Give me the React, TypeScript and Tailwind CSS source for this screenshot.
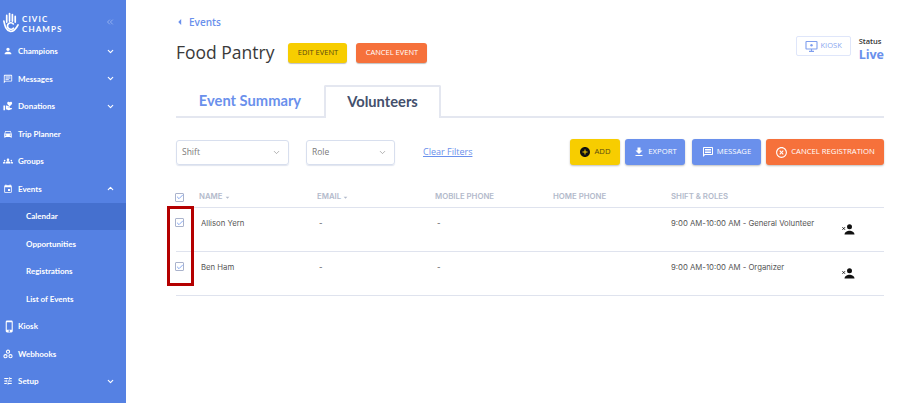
import React from "react";
import { ChevronDown, ChevronUp, ChevronsLeft, Check } from "lucide-react";
import {
  MdPerson,
  MdOutlineChat,
  MdOutlineMessage,
  MdVolunteerActivism,
  MdDirectionsCar,
  MdGroups,
  MdEvent,
  MdPhoneIphone,
  MdTune,
  MdFileDownload,
  MdAddCircle,
  MdHighlightOff,
  MdArrowDropDown,
  MdArrowLeft,
} from "react-icons/md";

const WebhookIcon = ({ size }: { size: number }) => (
  <svg width={size} height={size} viewBox="0 0 12 12" fill="none" stroke="white" strokeWidth="1.3">
    <circle cx="6" cy="3.2" r="1.9" />
    <circle cx="3" cy="8.6" r="1.9" />
    <circle cx="9" cy="8.6" r="1.9" />
  </svg>
);

const navItems = [
  { label: "Champions", icon: MdPerson, caret: "down" },
  { label: "Messages", icon: MdOutlineChat, caret: "down" },
  { label: "Donations", icon: MdVolunteerActivism, caret: "down" },
  { label: "Trip Planner", icon: MdDirectionsCar },
  { label: "Groups", icon: MdGroups },
  { label: "Events", icon: MdEvent, caret: "up" },
  { label: "Calendar", sub: true, active: true },
  { label: "Opportunities", sub: true },
  { label: "Registrations", sub: true },
  { label: "List of Events", sub: true },
  { label: "Kiosk", icon: MdPhoneIphone },
  { label: "Webhooks", icon: WebhookIcon },
  { label: "Setup", icon: MdTune, caret: "down" },
];

const rows = [
  { name: "Allison Yern", shift: "9:00 AM-10:00 AM - General Volunteer" },
  { name: "Ben Ham", shift: "9:00 AM-10:00 AM - Organizer" },
];

const Sidebar = () => (
  <aside className="w-[126px] shrink-0 bg-[#5581e3] text-white font-['Lato',sans-serif] overflow-hidden">
    <div className="h-[37px] flex items-start pt-[12px] pl-[2px] pr-[11px] justify-between">
      <div className="flex items-center gap-[3px]">
        <svg width="17" height="22" viewBox="0 0 18 22" fill="none" stroke="white" strokeWidth="1.8" strokeLinecap="round">
          <path d="M5 10V3M8 9V1M11 9V2M14 10V4" />
          <path d="M2 9c1 5 2 10 7 11 4 0 6-3 8-7" />
          <path d="M12 12a3.5 3.5 0 1 0 0 4.5" />
        </svg>
        <div className="text-[8px] leading-[10px] font-bold tracking-[1.1px] pt-[2px]">
          <div>CIVIC</div>
          <div>CHAMPS</div>
        </div>
      </div>
      <ChevronsLeft size={10} className="mt-[5px] text-[#9db8f0]" />
    </div>
    <nav className="pt-[0.5px]">
      {navItems.map((item) => {
        const Icon = item.icon;
        return (
          <div
            key={item.label}
            className={`h-[27.5px] flex items-center text-[8px] font-bold ${item.active ? "bg-[#4570cf]" : ""} ${item.sub ? "pl-[26px]" : "pl-[3px]"} pr-[11px]`}
          >
            {Icon && (
              <span className="w-[15px] shrink-0">
                <Icon size={item.label === "Kiosk" ? 13 : 10} />
              </span>
            )}
            <span className="flex-1">{item.label}</span>
            {item.caret === "down" && <ChevronDown size={9} strokeWidth={3} />}
            {item.caret === "up" && <ChevronUp size={9} strokeWidth={3} />}
          </div>
        );
      })}
    </nav>
  </aside>
);

const Select = ({ label, width }: { label: string; width: string }) => (
  <div className={`${width} h-[25px] border border-[#d8dfee] rounded-[3px] flex items-center justify-between pl-[5px] pr-[7px] text-[8.5px] text-[#7a7a7a] shadow-[0_1px_1px_rgba(180,190,215,0.4)]`}>
    <span>{label}</span>
    <ChevronDown size={9} className="text-[#9a9a9a]" />
  </div>
);

const ActionButton = ({
  bg,
  width,
  children,
}: {
  bg: string;
  width: string;
  children: React.ReactNode;
}) => (
  <div className={`${bg} ${width} h-[26px] rounded-[3px] flex items-center justify-center gap-[3px] text-[7.7px] shadow-[0_1px_2px_rgba(0,0,0,0.25)]`}>
    {children}
  </div>
);

const Box = () => (
  <div className="w-[9px] h-[9px] -ml-[1px] border border-[#aab3cc] rounded-[1px] flex items-center justify-center overflow-visible">
    <Check size={8} strokeWidth={2.5} className="shrink-0 text-[#6f97ee]" />
  </div>
);

const RemoveVolunteer = () => (
  <svg width="13" height="11" viewBox="0 0 13 11" fill="#111">
    <circle cx="7.5" cy="2.8" r="2.5" />
    <path d="M2.5 10.5c0-2.6 3-3.8 5-3.8s5 1.2 5 3.8z" />
    <path d="M0.4 3.2l2.6 2.6M3 3.2L0.4 5.8" stroke="#111" strokeWidth="0.9" />
  </svg>
);

const headCell = "text-[7.8px] font-semibold text-[#b3bacb]";
const columns = "grid grid-cols-[23px_118px_118px_118px_118px_1fr_46px]";

const Volunteers = () => (
  <div className="relative mt-[23px] w-[708px] font-['Inter',sans-serif]">
    <div className={`${columns} items-center h-[20px] border-b border-[#dfe3ee] pb-[1px]`}>
      <Box />
      <div className={`${headCell} flex items-center`}>NAME<MdArrowDropDown size={9} /></div>
      <div className={`${headCell} flex items-center`}>EMAIL<MdArrowDropDown size={9} /></div>
      <div className={headCell}>MOBILE PHONE</div>
      <div className={headCell}>HOME PHONE</div>
      <div className={headCell}>SHIFT &amp; ROLES</div>
      <div />
    </div>
    {rows.map((row) => (
      <div
        key={row.name}
        className={`${columns} h-[44px] border-b border-[#dfe3ee] text-[7.75px] text-[#555] pt-[10px]`}
      >
        <Box />
        <div className="pl-[2px]">{row.name}</div>
        <div className="pl-[2px]">-</div>
        <div className="pl-[2px]">-</div>
        <div />
        <div className="whitespace-nowrap">{row.shift}</div>
        <div className="pt-[6px] pl-[4px]">
          <RemoveVolunteer />
        </div>
      </div>
    ))}
    <div className="absolute left-[-9px] top-[18px] w-[27px] h-[80px] border-[3px] border-[#b40000]" />
  </div>
);

export default function App() {
  return (
    <div className="w-[921px] h-[403px] flex bg-white overflow-hidden font-['Open_Sans',sans-serif]">
      <Sidebar />
      <main className="flex-1 pl-[50px] pr-[37px] pt-[16px]">
        <div className="flex items-center text-[10px] font-semibold text-[#6a90ec] h-[12px]">
          <MdArrowLeft size={14} className="-ml-[3px]" />
          <span className="ml-[2px]">Events</span>
        </div>
        <div className="flex items-center justify-between mt-[13px] h-[23px]">
          <div className="flex items-center">
            <h1 className="text-[17.5px] text-[#3a3a3a] leading-none">Food Pantry</h1>
            <div className="ml-[14px] w-[59px] h-[20px] rounded-[3px] bg-[#f7cd00] text-[#5a4a10] text-[7.5px] flex items-center justify-center shadow-[0_1px_1px_rgba(0,0,0,0.25)]">EDIT EVENT</div>
            <div className="ml-[9px] w-[71px] h-[20px] rounded-[3px] bg-[#f6713b] text-white text-[7.5px] flex items-center justify-center shadow-[0_1px_1px_rgba(0,0,0,0.25)]">CANCEL EVENT</div>
          </div>
          <div className="flex items-start -mt-[6px]">
            <div className="w-[55px] h-[20px] border border-[#dfe6fa] rounded-[2px] flex items-center justify-center gap-[3px] text-[7.5px] text-[#8aa7ef]">
              <svg width="13" height="13" viewBox="0 0 13 13" fill="none" stroke="#7f9eee" strokeWidth="1.1">
                <rect x="1" y="1.5" width="11" height="7.5" rx="0.6" />
                <circle cx="6.5" cy="5.2" r="1.2" fill="#7f9eee" stroke="none" />
                <path d="M6.5 9v2M4 11.4h5" />
              </svg>
              KIOSK
            </div>
            <div className="ml-[8px]">
              <div className="text-[7.5px] font-semibold text-[#333] leading-[10px]">Status</div>
              <div className="text-[12.5px] font-bold text-[#6a90ec] leading-[17px]">Live</div>
            </div>
          </div>
        </div>
        <div className="mt-[21px] h-[33px] flex border-b-[2px] border-[#e4e7f0] font-['Lato',sans-serif] text-[14.7px] font-bold">
          <div className="w-[148px] flex items-center justify-center text-[#6a90ec]">Event Summary</div>
          <div className="w-[117px] h-[33px] pb-[2px] flex items-center justify-center text-[#44506c] bg-white border-2 border-b-0 border-[#e4e7f0] rounded-t-[2px]">Volunteers</div>
        </div>
        <div className="mt-[21px] flex items-center">
          <Select label="Shift" width="w-[113px]" />
          <div className="ml-[17px]"><Select label="Role" width="w-[89px]" /></div>
          <span className="ml-[28px] text-[9px] text-[#6a90ec] underline">Clear Filters</span>
          <div className="ml-auto flex gap-[5px] text-white">
            <ActionButton bg="bg-[#f7cd00] text-[#5a4a10]" width="w-[50px]">
              <MdAddCircle size={12} className="text-[#111]" />ADD
            </ActionButton>
            <ActionButton bg="bg-[#6a90ec]" width="w-[60px]">
              <MdFileDownload size={12} />EXPORT
            </ActionButton>
            <div className="ml-[2px]">
              <ActionButton bg="bg-[#6a90ec]" width="w-[69px]">
                <MdOutlineMessage size={12} />MESSAGE
              </ActionButton>
            </div>
            <ActionButton bg="bg-[#f6713b]" width="w-[118px]">
              <MdHighlightOff size={13} />CANCEL REGISTRATION
            </ActionButton>
          </div>
        </div>
        <Volunteers />
      </main>
    </div>
  );
}
